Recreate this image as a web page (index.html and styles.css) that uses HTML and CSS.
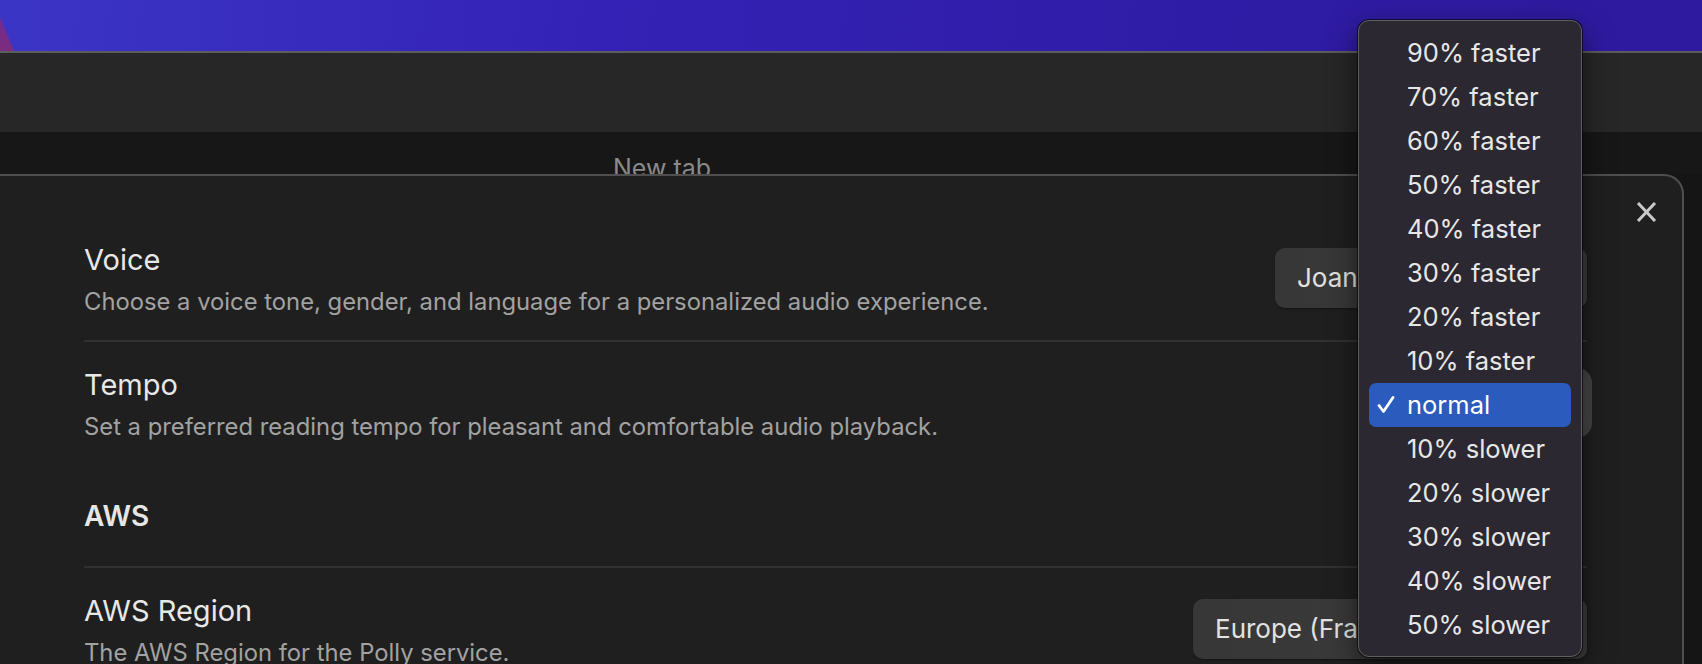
FILE: index.html
```html
<!DOCTYPE html>
<html lang="en">
<head>
<meta charset="utf-8">
<title>Settings</title>
<link rel="stylesheet" href="styles.css">
</head>
<body>
<div class="wallpaper"></div>
<div class="toolbar"></div>
<div class="tabstrip"><span class="tab-title">New tab</span></div>
<div class="modal">
  <button class="close" aria-label="Close">
    <svg width="21" height="20" viewBox="0 0 21 20"><path d="M2 1 L19 19 M19 1 L2 19" stroke="#c9c9c9" stroke-width="3" fill="none"/></svg>
  </button>
  <div class="setting">
    <div class="info">
      <div class="title">Voice</div>
      <div class="desc">Choose a voice tone, gender, and language for a personalized audio experience.</div>
    </div>
    <div class="select select-voice">Joanna</div>
  </div>
  <div class="setting setting-last">
    <div class="info">
      <div class="title">Tempo</div>
      <div class="desc">Set a preferred reading tempo for pleasant and comfortable audio playback.</div>
    </div>
    <div class="select select-tempo">normal</div>
  </div>
  <h2 class="section">AWS</h2>
  <div class="setting setting-last">
    <div class="info">
      <div class="title">AWS Region</div>
      <div class="desc">The AWS Region for the Polly service.</div>
    </div>
    <div class="select select-region">Europe (Frankfurt)</div>
  </div>
</div>
<ul class="menu">
  <li class="item">90% faster</li>
  <li class="item">70% faster</li>
  <li class="item">60% faster</li>
  <li class="item">50% faster</li>
  <li class="item">40% faster</li>
  <li class="item">30% faster</li>
  <li class="item">20% faster</li>
  <li class="item">10% faster</li>
  <li class="item item-selected"><svg class="check" width="18" height="18" viewBox="0 0 18 18"><path d="M2 9.5 L6.5 15.5 L16 1.5" stroke="#ffffff" stroke-width="2.8" fill="none" stroke-linecap="round" stroke-linejoin="round"/></svg>normal</li>
  <li class="item">10% slower</li>
  <li class="item">20% slower</li>
  <li class="item">30% slower</li>
  <li class="item">40% slower</li>
  <li class="item">50% slower</li>
</ul>
</body>
</html>
```

FILE: styles.css
```css
* { box-sizing: border-box; }

html, body {
  margin: 0;
  height: 664px;
  overflow: hidden;
}

body {
  background: #151515;
  font-family: Inter, "Liberation Sans", sans-serif;
  position: relative;
}

.wallpaper {
  height: 53px;
  border-bottom: 2px solid #5c5c5c;
  background: linear-gradient(95deg, #3b35c5 0%, #3422b6 35%, #2f1ca6 70%, #2e1a9e 100%);
  position: relative;
}

.wallpaper::before {
  content: "";
  position: absolute;
  left: 0;
  top: 0;
  width: 16px;
  height: 51px;
  background: linear-gradient(180deg, #6a2b9c, #7d2c7e);
  clip-path: polygon(0 17px, 14px 51px, 0 51px);
}

.toolbar {
  height: 79px;
  background: #272727;
}

.tabstrip {
  height: 42px;
  background: #171717;
  overflow: hidden;
  padding: 21px 0 0 613px;
}

.tab-title {
  display: block;
  font-size: 25px;
  line-height: 30px;
  color: #8a8a8a;
}

.modal {
  position: relative;
  width: 1684px;
  height: 490px;
  overflow: hidden;
  background: #1f1f1f;
  border-top: 2px solid #4f4f4f;
  border-right: 2px solid #4f4f4f;
  border-top-right-radius: 20px;
  padding: 41px 95px 0 84px;
}

.close {
  position: absolute;
  top: 26px;
  right: 25px;
  width: 21px;
  height: 20px;
  padding: 0;
  border: 0;
  background: none;
  display: block;
}

.close svg { display: block; }

.setting {
  display: flex;
  align-items: center;
  justify-content: space-between;
  padding: 25px 0 22px;
  border-bottom: 2px solid #313131;
}

.setting-last { border-bottom: 0; }

.title {
  font-size: 29px;
  line-height: 36px;
  color: #e8e8e8;
}

.desc {
  margin-top: 8px;
  font-size: 23.8px;
  line-height: 32px;
  color: #a2a2a2;
}

.section {
  margin: 33px 0 0;
  padding-bottom: 32px;
  border-bottom: 2px solid #313131;
  font-size: 28px;
  line-height: 36px;
  font-weight: 600;
  color: #e6e6e6;
}

.select {
  height: 60px;
  margin-bottom: 4px;
  border-radius: 10px;
  background: linear-gradient(90deg, #373737, #3c3c3c);
  color: #e2e2e2;
  font-size: 26px;
  line-height: 60px;
  padding-left: 22px;
  white-space: nowrap;
  overflow: hidden;
  box-shadow: 0 1px 2px rgba(0, 0, 0, 0.4);
}

.select-voice { width: 312px; }
.select-region { width: 394px; }
.select-tempo {
  width: 200px;
  background: #484848;
  box-shadow: 0 0 0 5px #454545;
}

.menu {
  position: absolute;
  left: 1358px;
  top: 20px;
  width: 224px;
  margin: 0;
  padding: 10px 10px 9px;
  list-style: none;
  background: #2b2831;
  border: 1px solid #606062;
  border-radius: 11px;
  box-shadow: 0 0 0 1px rgba(0, 0, 0, 0.6), 0 10px 30px rgba(0, 0, 0, 0.55);
}

.item {
  height: 44px;
  line-height: 44px;
  padding-left: 38px;
  font-size: 25.5px;
  color: #e7e7e7;
  border-radius: 7px;
  white-space: nowrap;
  display: flex;
  align-items: center;
}

.item-selected {
  background: #2a5bbd;
  color: #ffffff;
  padding-left: 8px;
}

.check {
  display: block;
  width: 18px;
  height: 18px;
  margin-right: 12px;
}
```
